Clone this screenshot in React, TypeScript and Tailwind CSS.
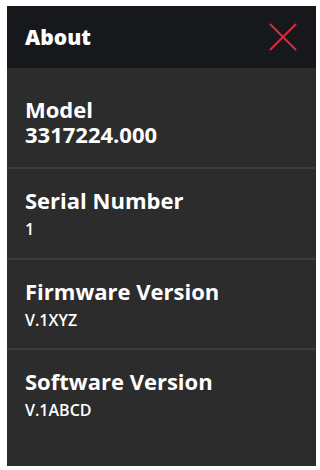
import React from "react";

const rows = [
  { label: "Serial Number", value: "1", h: "h-[91px]" },
  { label: "Firmware Version", value: "V.1XYZ", h: "h-[90px]" },
  { label: "Software Version", value: "V.1ABCD", h: "flex-1" },
];

export default function App() {
  return (
    <div className="w-[320px] h-[470px] bg-white pt-[6px] pl-[7px]" style={{ fontFamily: '"Open Sans", sans-serif' }}>
      <div className="w-[309px] h-[460px] bg-[#2c2c2c] flex flex-col">
        <div className="h-[62px] bg-[#17181c] flex items-center justify-between pl-[18px] pr-[19px]">
          <span className="text-white text-[21px] font-extrabold leading-[28px]">About</span>
          <svg width="28" height="28" viewBox="0 0 28 28">
            <path d="M1.5 1.5 L26.5 26.5 M26.5 1.5 L1.5 26.5" stroke="#dc2b38" strokeWidth="2" strokeLinecap="round" />
          </svg>
        </div>
        <div className="h-[101px] pt-[29px] pl-[18px] border-b-2 border-[#3c3c3c]">
          <p className="text-white text-[22px] font-bold leading-[25px]">
            Model
            <br />
            3317224.000
          </p>
        </div>
        {rows.map((r, i) => (
          <div key={r.label} className={`${r.h} pt-[18px] pl-[18px] ${i < rows.length - 1 ? "border-b-2 border-[#3c3c3c]" : ""}`}>
            <div className="text-white text-[22px] font-bold leading-[27px]">{r.label}</div>
            <div className="text-white text-[16px] font-semibold leading-[20px] mt-[5px]">{r.value}</div>
          </div>
        ))}
      </div>
    </div>
  );
}
